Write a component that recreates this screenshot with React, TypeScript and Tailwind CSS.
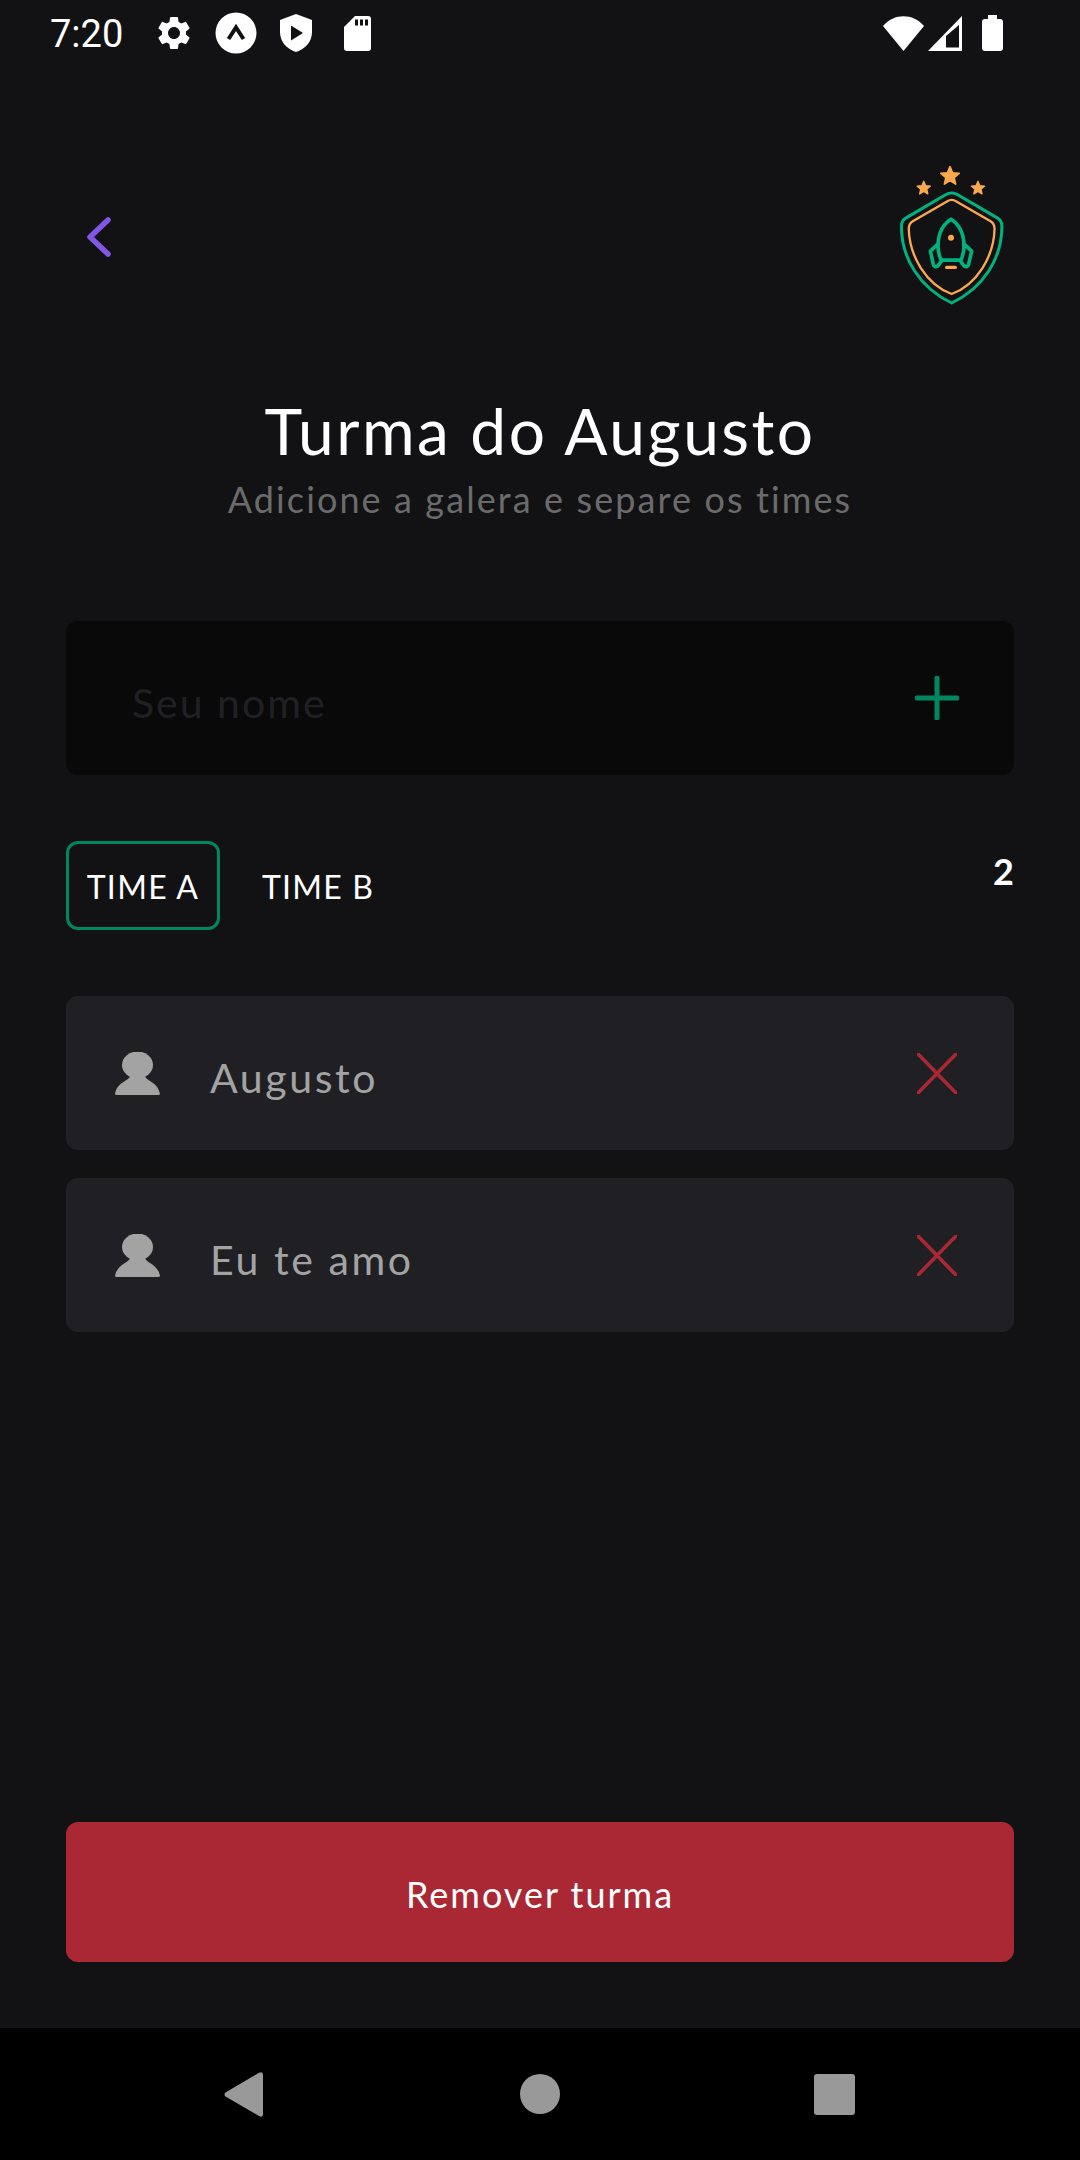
const star = (cx: number, cy: number, r: number) => {
  const pts: string[] = [];
  for (let i = 0; i < 10; i++) {
    const rad = i % 2 === 0 ? r : r * 0.45;
    const a = -Math.PI / 2 + (i * Math.PI) / 5;
    pts.push(`${(cx + rad * Math.cos(a)).toFixed(1)},${(cy + rad * Math.sin(a)).toFixed(1)}`);
  }
  return pts.join(" ");
};

function Logo() {
  return (
    <svg viewBox="110 40 330 430" className="w-[110px] h-[143px] block" fill="none">
      <polygon points={star(272, 80, 29)} fill="#fba94c" stroke="#fba94c" strokeWidth="5" strokeLinejoin="round" />
      <polygon points={star(193, 116, 21)} fill="#fba94c" stroke="#fba94c" strokeWidth="4" strokeLinejoin="round" />
      <polygon points={star(356, 116, 21)} fill="#fba94c" stroke="#fba94c" strokeWidth="4" strokeLinejoin="round" />
      <path d="M277 130Q268 130 260 135L140 205Q125 213 126 232C126 325 180 415 277 461C374 415 428 325 428 232Q429 213 414 205L294 135Q286 130 277 130Z" stroke="#00b37e" strokeWidth="9" />
      <path d="M277 151Q270 151 264 155L160 215Q148 222 148 238C150 320 200 405 277 434C354 405 404 320 406 238Q406 222 394 215L290 155Q284 151 277 151Z" stroke="#fba94c" strokeWidth="7" />
      <path d="M275 209C250 225 236 255 236 290Q236 310 245 332L305 332Q314 310 314 290C314 255 300 225 275 209Z" stroke="#00b37e" strokeWidth="11" strokeLinejoin="round" />
      <path d="M236 283L213 305L222 345Q225 355 235 350L248 333M314 283L337 305L328 345Q325 355 315 350L302 333" stroke="#00b37e" strokeWidth="11" strokeLinejoin="round" strokeLinecap="round" />
      <circle cx="275" cy="265" r="9" fill="#fba94c" />
      <path d="M262 354H288" stroke="#fba94c" strokeWidth="10" strokeLinecap="round" />
    </svg>
  );
}

function Person() {
  return (
    <svg viewBox="0 0 45 43" className="w-[45px] h-[43px] block" fill="#a3a3a3">
      <ellipse cx="22.5" cy="13" rx="15.5" ry="13.5" />
      <path d="M15 24C14 29 2 30 0 42Q0 43 2 43H43Q45 43 45 42C43 30 31 29 30 24Z" />
    </svg>
  );
}

function Cross() {
  return (
    <svg viewBox="0 0 40 41" className="w-[40px] h-[41px] block" fill="none" stroke="#aa2834" strokeWidth="3.6" strokeLinecap="round">
      <path d="M1 1L39 40M39 1L1 40" />
    </svg>
  );
}

function Row({ name }: { name: string }) {
  return (
    <div className="flex items-center h-[154px] rounded-[12px] bg-[#202024] pl-[49px] pr-[57px]">
      <Person />
      <span className="ml-[50px] flex-1 text-[41px] leading-[50px] tracking-[2.6px] text-[#a3a3a3] font-['Lato',sans-serif] pt-[9px]">{name}</span>
      <Cross />
    </div>
  );
}

export default function App() {
  return (
    <div className="flex flex-col w-[1080px] h-[2160px] bg-[#121214] font-['Lato',sans-serif] text-white overflow-hidden">
      {/* Status bar */}
      <div className="flex items-center h-[66px] pl-[50px] pr-[77px]">
        <span className="font-['Roboto',sans-serif] text-[38px] leading-[44px] text-white pt-[2px]">7:20</span>
        <svg viewBox="0 0 24 24" className="w-[40px] h-[40px] ml-[31px]" fill="#fff">
          <path d="M19.14 12.94c.04-.3.06-.61.06-.94 0-.32-.02-.64-.07-.94l2.03-1.58c.18-.14.23-.41.12-.61l-1.92-3.32c-.12-.22-.37-.29-.59-.22l-2.39.96c-.5-.38-1.03-.7-1.62-.94l-.36-2.54c-.04-.24-.24-.41-.48-.41h-3.84c-.24 0-.43.17-.47.41l-.36 2.54c-.59.24-1.13.57-1.62.94l-2.39-.96c-.22-.08-.47 0-.59.22L2.74 8.87c-.12.21-.08.47.12.61l2.03 1.58c-.05.3-.09.63-.09.94s.02.64.07.94l-2.03 1.58c-.18.14-.23.41-.12.61l1.92 3.32c.12.22.37.29.59.22l2.39-.96c.5.38 1.03.7 1.62.94l.36 2.54c.05.24.24.41.48.41h3.84c.24 0 .44-.17.47-.41l.36-2.54c.59-.24 1.13-.56 1.62-.94l2.39.96c.22.08.47 0 .59-.22l1.92-3.32c.12-.22.07-.47-.12-.61l-2.01-1.58zM12 15.6c-1.98 0-3.6-1.62-3.6-3.6s1.62-3.6 3.6-3.6 3.6 1.62 3.6 3.6-1.62 3.6-3.6 3.6z" />
        </svg>
        <svg viewBox="0 0 42 42" className="w-[42px] h-[42px] ml-[21px]">
          <circle cx="21" cy="21" r="20.5" fill="#fff" />
          <path d="M13.5 27L21 15.5L28.5 27" stroke="#121214" strokeWidth="4" fill="none" strokeLinejoin="miter" />
        </svg>
        <svg viewBox="0 0 32 38" className="w-[32px] h-[38px] ml-[23px]">
          <path d="M16 0L32 6V18C32 28 25 35 16 38C7 35 0 28 0 18V6Z" fill="#fff" />
          <path d="M11 11.5L23 19L11 26.5Z" fill="#121214" strokeLinejoin="round" />
        </svg>
        <svg viewBox="0 0 27 35" className="w-[27px] h-[35px] ml-[32px]">
          <path d="M11 0H24Q27 0 27 3V32Q27 35 24 35H3Q0 35 0 32V11Z" fill="#fff" />
          <path d="M11 3.500h3v6h-3zM16 3.500h3v6h-3zM21 3.500h3v6h-3z" fill="#121214" />
        </svg>
        <div className="flex-1" />
        <svg viewBox="0 0 41 35" className="w-[41px] h-[35px]" fill="#fff">
          <path d="M0 10C11 -3 30 -3 41 10L20.5 35Z" />
        </svg>
        <svg viewBox="0 0 34 35" className="w-[34px] h-[35px] ml-[4px]">
          <path d="M34 0V35H0Z" fill="#fff" />
          <path d="M18 31.500V20L31 9V31.500Z" fill="#121214" />
        </svg>
        <svg viewBox="0 0 21 36" className="w-[21px] h-[36px] ml-[20px]" fill="#fff">
          <path d="M6 0H15V4H18Q21 4 21 7V33Q21 36 18 36H3Q0 36 0 33V7Q0 4 3 4H6Z" />
        </svg>
      </div>

      {/* Header */}
      <div className="flex items-center justify-between pl-[87px] pr-[74px] mt-[97px] h-[143px]">
        <svg viewBox="0 0 24 40" className="w-[24px] h-[40px] mt-[5px]" fill="none" stroke="#8257e5" strokeWidth="5.500" strokeLinecap="round" strokeLinejoin="round">
          <path d="M21 3L3 20L21 37" />
        </svg>
        <Logo />
      </div>

      {/* Title */}
      <div className="flex flex-col items-center mt-[86px]">
        <h1 className="text-[64px] leading-[78px] font-normal tracking-[2.500px] text-white">Turma do Augusto</h1>
        <p className="text-[36px] leading-[44px] tracking-[2.100px] text-[#6b6b6b] mt-[7px]">Adicione a galera e separe os times</p>
      </div>

      {/* Main */}
      <div className="flex flex-col flex-1 px-[66px] mt-[100px]">
        <div className="flex items-center justify-between h-[154px] shrink-0 rounded-[12px] bg-[#09090a] pl-[66px] pr-[55px]">
          <span className="text-[41px] leading-[50px] tracking-[2px] text-[#202024] pt-[9px]">Seu nome</span>
          <svg viewBox="0 0 44 44" className="w-[44px] h-[44px]" fill="none" stroke="#00875f" strokeWidth="5" strokeLinecap="round">
            <path d="M22 2V42M2 22H42" />
          </svg>
        </div>

        <div className="flex items-start mt-[66px] h-[89px] shrink-0">
          <div className="flex items-center justify-center w-[154px] h-[89px] rounded-[12px] border-[3px] border-[#00875f]">
            <span className="text-[32px] leading-[40px] tracking-[1.300px] pt-[2px]">TIME A</span>
          </div>
          <div className="flex items-center justify-center h-[89px] ml-[42px]">
            <span className="text-[32px] leading-[40px] tracking-[1.200px] pt-[2px]">TIME B</span>
          </div>
          <span className="ml-auto text-[36px] leading-[40px] font-bold mt-[10px]">2</span>
        </div>

        <div className="flex flex-col gap-[28px] mt-[66px]">
          <Row name="Augusto" />
          <Row name="Eu te amo" />
        </div>

        <div className="flex-1" />

        <div className="flex items-center justify-center h-[140px] mb-[66px] rounded-[12px] bg-[#aa2834]">
          <span className="text-[36px] leading-[44px] tracking-[2px] text-white pt-[3px]">Remover turma</span>
        </div>
      </div>

      {/* Nav */}
      <div className="flex items-center justify-center h-[132px] bg-black shrink-0 pr-[2px]">
        <svg viewBox="0 0 39 45" className="w-[39px] h-[45px]" fill="#999">
          <path d="M1.500 20.500L35 .8Q39 -1 39 3V42Q39 46 35 44L1.500 24.500Q-.5 22.500 1.500 20.500Z" />
        </svg>
        <div className="w-[40px] h-[40px] rounded-full bg-[#999] ml-[257px]" />
        <div className="w-[41px] h-[41px] rounded-[3px] bg-[#999] ml-[254px]" />
      </div>
    </div>
  );
}
